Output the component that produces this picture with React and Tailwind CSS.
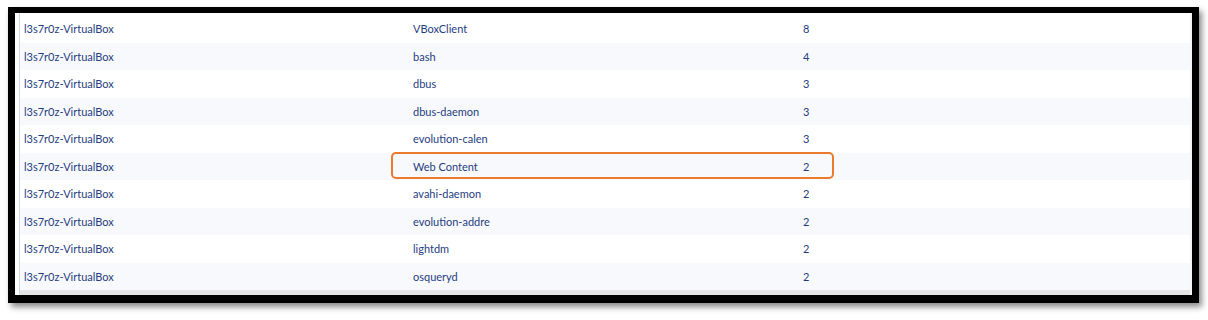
import React from "react";

const rows = [
  ["l3s7r0z-VirtualBox", "VBoxClient", "8"],
  ["l3s7r0z-VirtualBox", "bash", "4"],
  ["l3s7r0z-VirtualBox", "dbus", "3"],
  ["l3s7r0z-VirtualBox", "dbus-daemon", "3"],
  ["l3s7r0z-VirtualBox", "evolution-calen", "3"],
  ["l3s7r0z-VirtualBox", "Web Content", "2"],
  ["l3s7r0z-VirtualBox", "avahi-daemon", "2"],
  ["l3s7r0z-VirtualBox", "evolution-addre", "2"],
  ["l3s7r0z-VirtualBox", "lightdm", "2"],
  ["l3s7r0z-VirtualBox", "osqueryd", "2"],
];

export default function App() {
  return (
    <div className="w-[1208px] h-[320px] bg-white pt-[7px] pl-[8px]" style={{ fontFamily: "Lato, 'Open Sans', sans-serif" }}>
      <div className="w-[1191px] h-[296px] border-t-[6px] border-x-[7px] border-b-[8px] border-black bg-white flex shadow-[3px_4px_6px_rgba(0,0,0,0.45)]">
        <div className="w-[4px] bg-white" />
        <div className="flex-1 flex flex-col border-l border-[#cfd6e6]">
          <div className="h-[2px] bg-white" />
          <div className="flex flex-col">
            {rows.map((r, i) => (
              <div
                key={i}
                className={`relative grid grid-cols-3 h-[27.5px] items-center pt-[1px] text-[11px] text-[#1f3d80] ${i % 2 === 1 ? "bg-[#f8f9fc]" : "bg-white"}`}
              >
                <div className="pl-[4px]">{r[0]}</div>
                <div className="pl-[3px]">{r[1]}</div>
                <div className="pl-[3px]">{r[2]}</div>
                {i === 5 && (
                  <div className="absolute left-[371px] top-[-1px] w-[443px] h-[27px] rounded-[5px] border-2 border-[#ec7a2e]" />
                )}
              </div>
            ))}
          </div>
          <div className="flex-1 bg-[#e5e5e5]" />
        </div>
        <div className="w-[2px] bg-[#f4f4f4]" />
      </div>
    </div>
  );
}
